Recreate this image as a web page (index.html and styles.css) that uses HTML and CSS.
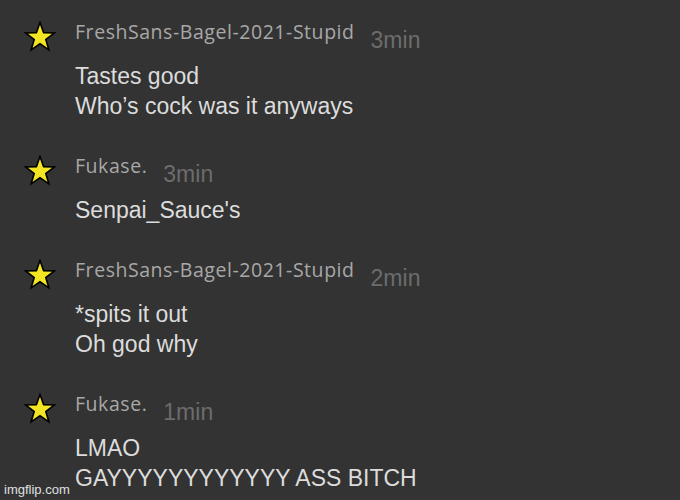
FILE: index.html
```html
<!DOCTYPE html>
<html>
<head>
<meta charset="utf-8">
<link rel="stylesheet" href="styles.css">
</head>
<body>
<div class="chat">
  <div class="msg">
    <svg class="star" viewBox="0 0 32 32"><polygon points="16,1.5 19.6,11.6 30.4,11.9 21.8,18.5 24.9,28.9 16,22.8 7.1,28.9 10.2,18.5 1.6,11.9 12.4,11.6" /></svg>
    <div class="body">
      <div class="head"><span class="name">FreshSans-Bagel-2021-Stupid</span><span class="time">3min</span></div>
      <div class="text">Tastes good<br>Who’s cock was it anyways</div>
    </div>
  </div>
  <div class="msg">
    <svg class="star" viewBox="0 0 32 32"><polygon points="16,1.5 19.6,11.6 30.4,11.9 21.8,18.5 24.9,28.9 16,22.8 7.1,28.9 10.2,18.5 1.6,11.9 12.4,11.6" /></svg>
    <div class="body">
      <div class="head"><span class="name">Fukase.</span><span class="time">3min</span></div>
      <div class="text">Senpai_Sauce's</div>
    </div>
  </div>
  <div class="msg">
    <svg class="star" viewBox="0 0 32 32"><polygon points="16,1.5 19.6,11.6 30.4,11.9 21.8,18.5 24.9,28.9 16,22.8 7.1,28.9 10.2,18.5 1.6,11.9 12.4,11.6" /></svg>
    <div class="body">
      <div class="head"><span class="name">FreshSans-Bagel-2021-Stupid</span><span class="time">2min</span></div>
      <div class="text">*spits it out<br>Oh god why</div>
    </div>
  </div>
  <div class="msg">
    <svg class="star" viewBox="0 0 32 32"><polygon points="16,1.5 19.6,11.6 30.4,11.9 21.8,18.5 24.9,28.9 16,22.8 7.1,28.9 10.2,18.5 1.6,11.9 12.4,11.6" /></svg>
    <div class="body">
      <div class="head"><span class="name">Fukase.</span><span class="time">1min</span></div>
      <div class="text">LMAO<br>GAYYYYYYYYYYYY ASS BITCH</div>
    </div>
  </div>
</div>
<div class="watermark">imgflip.com</div>
</body>
</html>
```
FILE: styles.css
```css
html, body {
  margin: 0;
  padding: 0;
  background: #333333;
  width: 680px;
  height: 500px;
  overflow: hidden;
}
body {
  position: relative;
  font-family: "Liberation Sans", Arial, sans-serif;
}
.chat {
  display: flex;
  flex-direction: column;
  gap: 34px;
  padding-top: 21px;
}
.msg {
  display: flex;
  align-items: flex-start;
  padding-left: 24px;
}
.star {
  width: 32px;
  height: 32px;
  flex: none;
  margin-top: 0;
  margin-right: 19px;
}
.star polygon {
  fill: #f3e424;
  stroke: #000;
  stroke-width: 1.6;
  stroke-linejoin: miter;
}
.head {
  display: flex;
  align-items: flex-start;
  height: 32px;
}
.name {
  font-family: "Open Sans", "Noto Sans", sans-serif;
  font-size: 19.5px;
  letter-spacing: 0.55px;
  line-height: 22px;
  color: #a8a8a8;
}
.time {
  font-size: 23px;
  line-height: 26px;
  margin-top: 6px;
  margin-left: 16px;
  color: #6c6c6c;
}
.text {
  margin-top: 8px;
  font-size: 23px;
  line-height: 30px;
  color: #dcdcdc;
}
.watermark {
  position: absolute;
  left: 4px;
  bottom: 3px;
  font-size: 13px;
  line-height: 15px;
  color: #e0e0e0;
}
```
